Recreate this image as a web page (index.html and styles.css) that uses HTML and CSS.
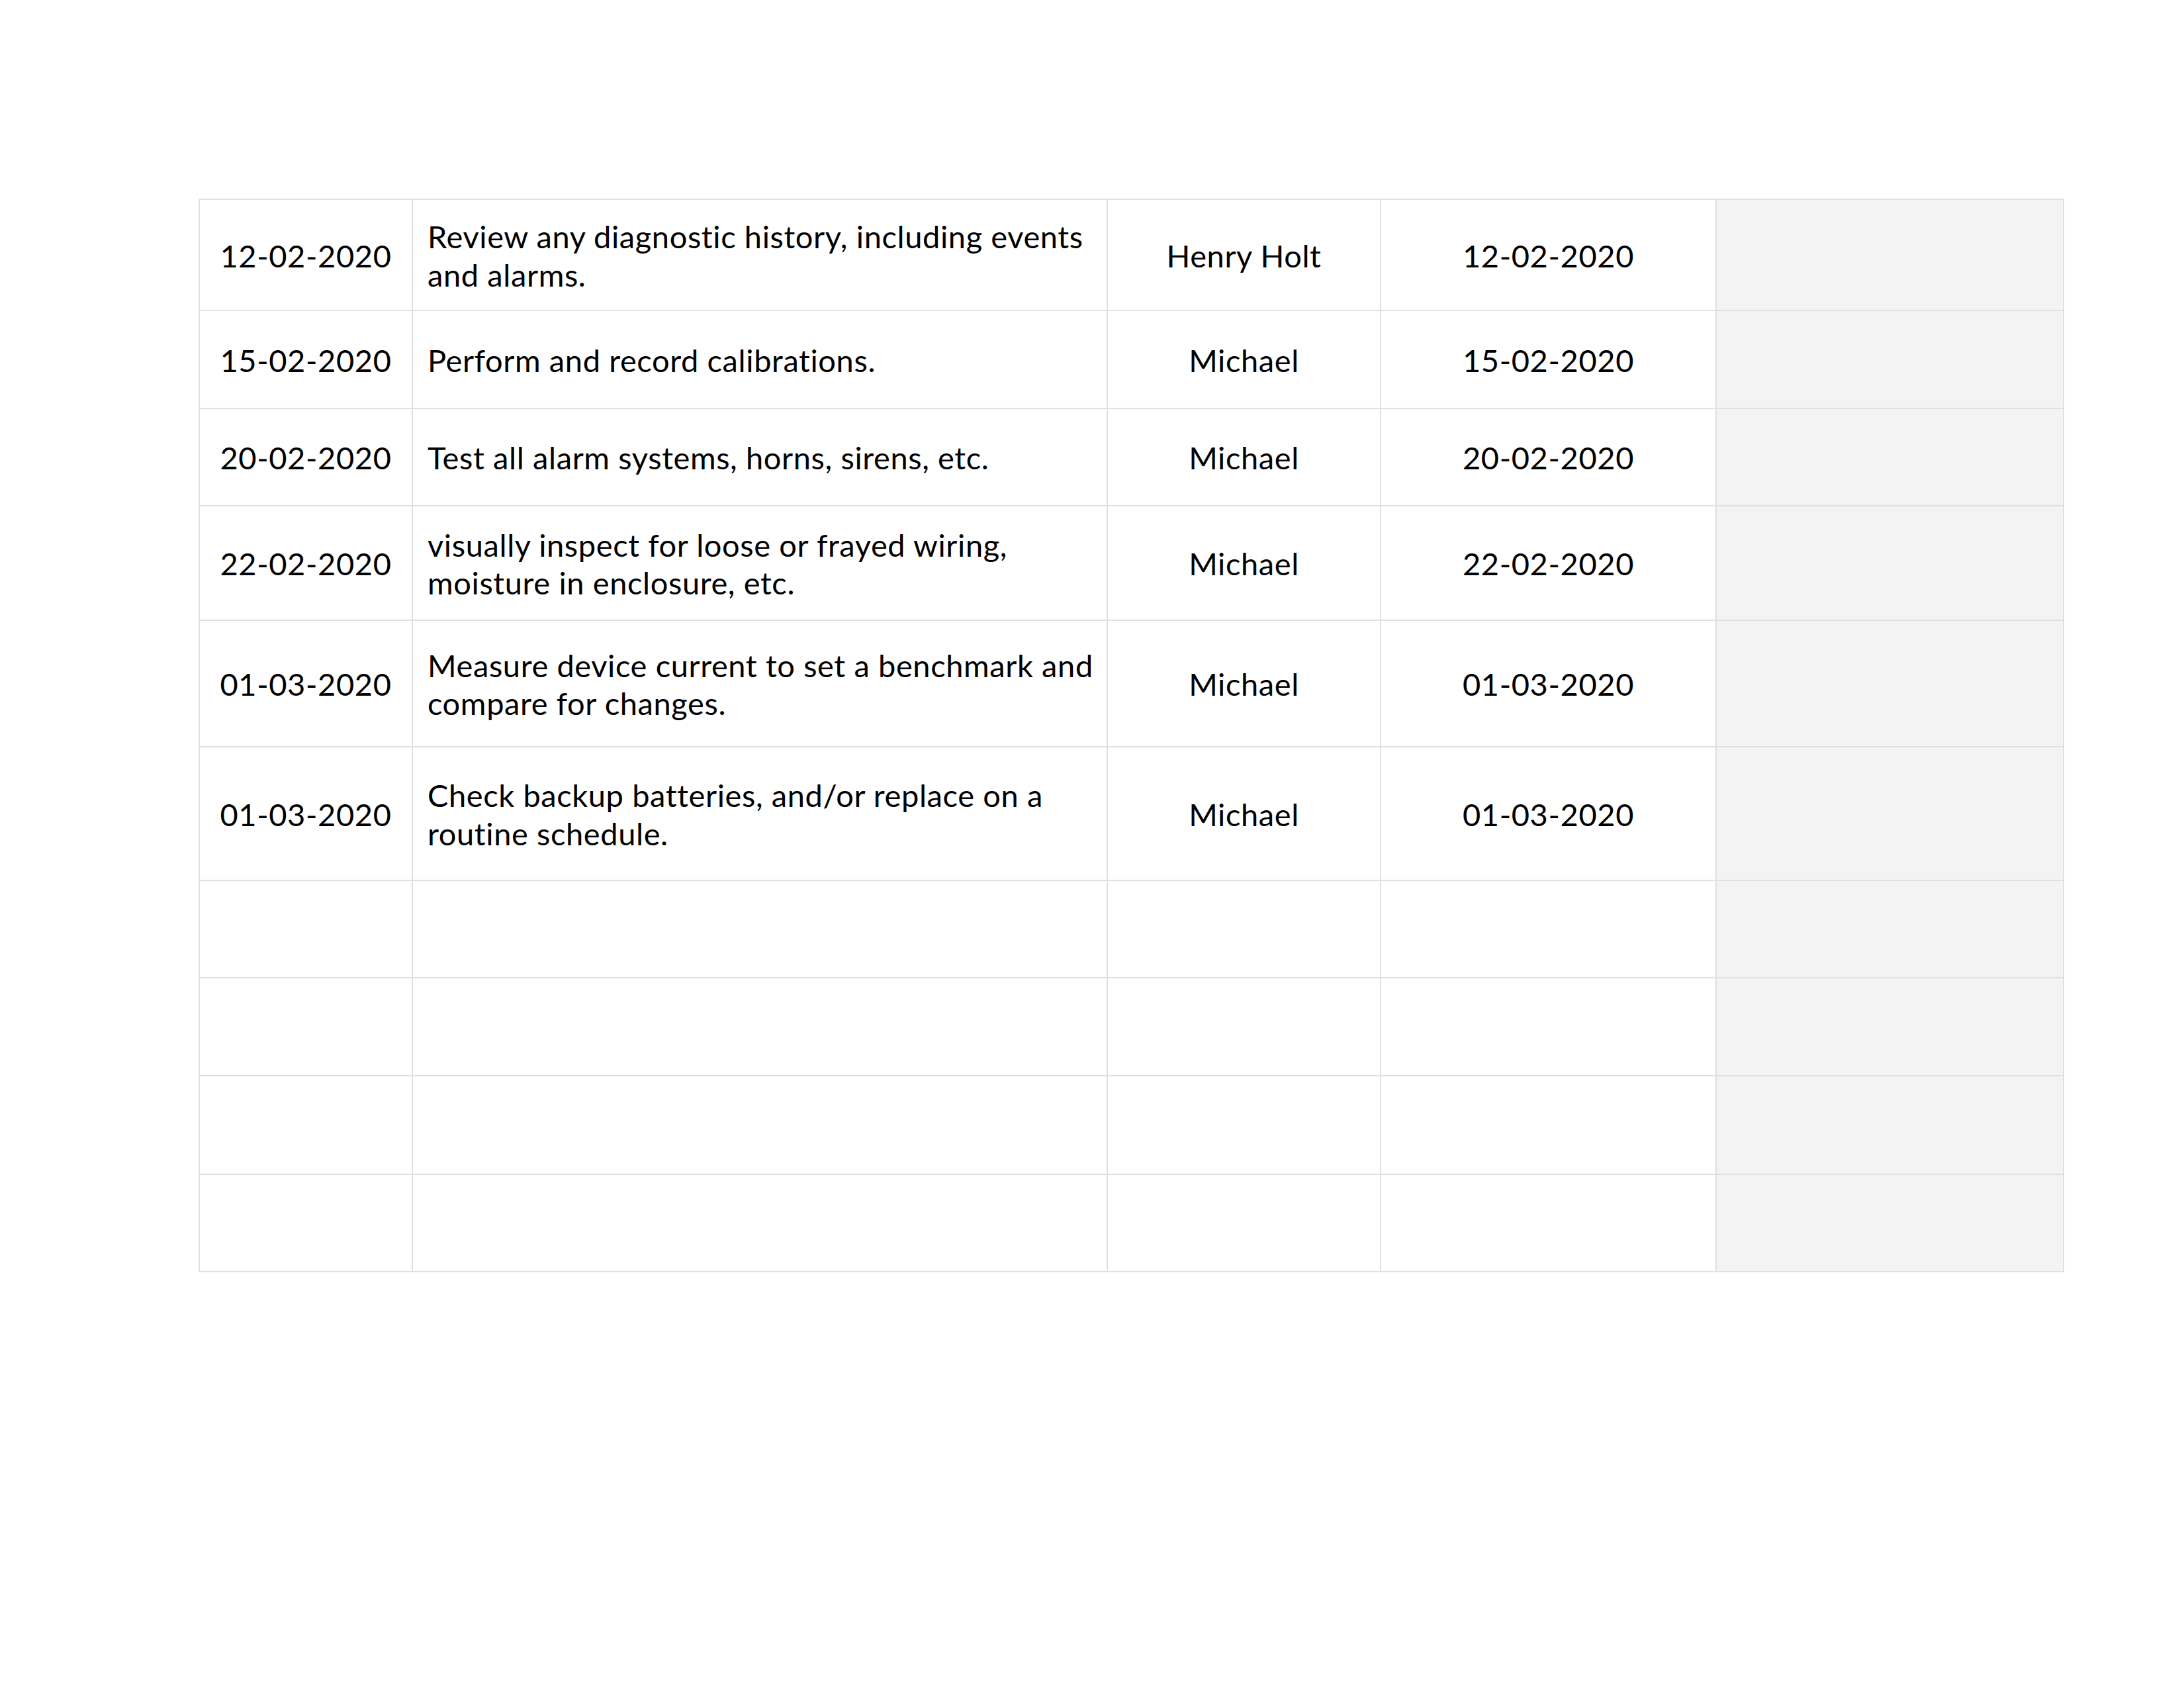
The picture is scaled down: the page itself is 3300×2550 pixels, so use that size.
FILE: index.html
```html
<!DOCTYPE html>
<html lang="en">
<head>
<meta charset="utf-8">
<title>Maintenance log</title>
<link rel="stylesheet" href="styles.css">
</head>
<body>
<main class="page">
  <div class="log">
    <div class="cell date">12-02-2020</div>
    <div class="cell task">Review any diagnostic history, including events<br>and alarms.</div>
    <div class="cell name">Henry Holt</div>
    <div class="cell done">12-02-2020</div>
    <div class="cell sign"></div>

    <div class="cell date">15-02-2020</div>
    <div class="cell task">Perform and record calibrations.</div>
    <div class="cell name">Michael</div>
    <div class="cell done">15-02-2020</div>
    <div class="cell sign"></div>

    <div class="cell date">20-02-2020</div>
    <div class="cell task">Test all alarm systems, horns, sirens, etc.</div>
    <div class="cell name">Michael</div>
    <div class="cell done">20-02-2020</div>
    <div class="cell sign"></div>

    <div class="cell date">22-02-2020</div>
    <div class="cell task">visually inspect for loose or frayed wiring,<br>moisture in enclosure, etc.</div>
    <div class="cell name">Michael</div>
    <div class="cell done">22-02-2020</div>
    <div class="cell sign"></div>

    <div class="cell date">01-03-2020</div>
    <div class="cell task">Measure device current to set a benchmark and<br>compare for changes.</div>
    <div class="cell name">Michael</div>
    <div class="cell done">01-03-2020</div>
    <div class="cell sign"></div>

    <div class="cell date">01-03-2020</div>
    <div class="cell task">Check backup batteries, and/or replace on a<br>routine schedule.</div>
    <div class="cell name">Michael</div>
    <div class="cell done">01-03-2020</div>
    <div class="cell sign"></div>

    <div class="cell date"></div>
    <div class="cell task"></div>
    <div class="cell name"></div>
    <div class="cell done"></div>
    <div class="cell sign"></div>

    <div class="cell date"></div>
    <div class="cell task"></div>
    <div class="cell name"></div>
    <div class="cell done"></div>
    <div class="cell sign"></div>

    <div class="cell date"></div>
    <div class="cell task"></div>
    <div class="cell name"></div>
    <div class="cell done"></div>
    <div class="cell sign"></div>

    <div class="cell date"></div>
    <div class="cell task"></div>
    <div class="cell name"></div>
    <div class="cell done"></div>
    <div class="cell sign"></div>
  </div>
</main>
</body>
</html>
```
FILE: styles.css
```css
html, body {
  margin: 0;
  padding: 0;
  background: #ffffff;
}

.page {
  padding: 300px 0 0 300px;
  font-family: "Lato", "Noto Sans", sans-serif;
  font-size: 47px;
  line-height: 57.5px;
  letter-spacing: 0.6px;
  font-variant-ligatures: none;
  color: #000000;
}

.log {
  display: grid;
  grid-template-columns: 322px 1050px 413px 507px 525px;
  grid-template-rows: 168px 148px 147px 173px 191px 202px 147px 148px 149px 147px;
  width: max-content;
  border-top: 2px solid #e0e0e0;
  border-left: 2px solid #e0e0e0;
}

.cell {
  display: flex;
  align-items: center;
  padding-top: 3px;
  border-right: 2px solid #e0e0e0;
  border-bottom: 2px solid #e0e0e0;
  white-space: nowrap;
}

.date {
  justify-content: center;
}

.task {
  padding-left: 22px;
}

.name {
  justify-content: center;
}

.done {
  justify-content: center;
}

.sign {
  background: #f3f3f3;
}
```
